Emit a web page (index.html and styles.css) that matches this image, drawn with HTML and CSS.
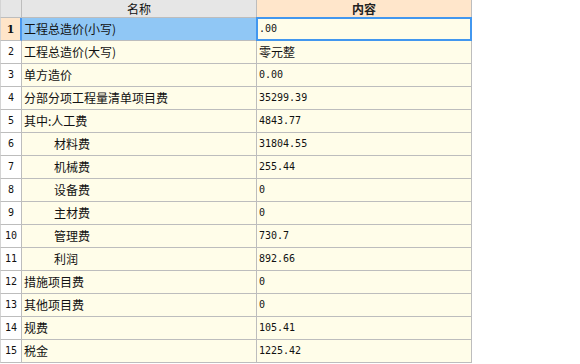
FILE: index.html
```html
<!DOCTYPE html>
<html lang="zh">
<head>
<meta charset="utf-8">
<title>工程造价</title>
<link rel="stylesheet" href="styles.css">
</head>
<body>
<div class="sheet">
  <div class="hd idx"></div>
  <div class="hd name">名称</div>
  <div class="hd val">内容</div>

  <div class="idx cur">1</div>
  <div class="name sel">工程总造价(小写)</div>
  <div class="val active"><span class="num">.00</span></div>

  <div class="idx"><span class="num">2</span></div>
  <div class="name">工程总造价(大写)</div>
  <div class="val">零元整</div>

  <div class="idx"><span class="num">3</span></div>
  <div class="name">单方造价</div>
  <div class="val"><span class="num">0.00</span></div>

  <div class="idx"><span class="num">4</span></div>
  <div class="name">分部分项工程量清单项目费</div>
  <div class="val"><span class="num">35299.39</span></div>

  <div class="idx"><span class="num">5</span></div>
  <div class="name">其中:人工费</div>
  <div class="val"><span class="num">4843.77</span></div>

  <div class="idx"><span class="num">6</span></div>
  <div class="name sub">材料费</div>
  <div class="val"><span class="num">31804.55</span></div>

  <div class="idx"><span class="num">7</span></div>
  <div class="name sub">机械费</div>
  <div class="val"><span class="num">255.44</span></div>

  <div class="idx"><span class="num">8</span></div>
  <div class="name sub">设备费</div>
  <div class="val"><span class="num">0</span></div>

  <div class="idx"><span class="num">9</span></div>
  <div class="name sub">主材费</div>
  <div class="val"><span class="num">0</span></div>

  <div class="idx"><span class="num">10</span></div>
  <div class="name sub">管理费</div>
  <div class="val"><span class="num">730.7</span></div>

  <div class="idx"><span class="num">11</span></div>
  <div class="name sub">利润</div>
  <div class="val"><span class="num">892.66</span></div>

  <div class="idx"><span class="num">12</span></div>
  <div class="name">措施项目费</div>
  <div class="val"><span class="num">0</span></div>

  <div class="idx"><span class="num">13</span></div>
  <div class="name">其他项目费</div>
  <div class="val"><span class="num">0</span></div>

  <div class="idx"><span class="num">14</span></div>
  <div class="name">规费</div>
  <div class="val"><span class="num">105.41</span></div>

  <div class="idx"><span class="num">15</span></div>
  <div class="name">税金</div>
  <div class="val"><span class="num">1225.42</span></div>
</div>
</body>
</html>
```
FILE: styles.css
```css
html, body {
  margin: 0;
  padding: 0;
  background: #ffffff;
}

body {
  font-family: "Noto Sans CJK SC", "DejaVu Sans", sans-serif;
  font-size: 12px;
  color: #111111;
}

.sheet {
  display: grid;
  grid-template-columns: 22px 235px 215px;
  grid-template-rows: 18px;
  grid-auto-rows: 23px;
  width: 472px;
}

.sheet > div {
  box-sizing: border-box;
  border-right: 1px solid #bdbdbd;
  border-bottom: 1px solid #bdbdbd;
  display: flex;
  align-items: center;
  white-space: nowrap;
  overflow: hidden;
  line-height: 1;
}

.num {
  font-family: "DejaVu Sans Mono", "Liberation Mono", monospace;
  font-size: 10px;
  letter-spacing: 0;
}

.idx {
  justify-content: center;
  background: #ffffff;
  border-left: 1px solid #d4d4d4;
}

.name {
  background: #fffde9;
  padding-left: 2px;
}

.name.sub {
  padding-left: 32px;
}

.val {
  background: #fffde9;
  padding-left: 2px;
}

.hd {
  background: #e6e6e6;
  justify-content: center;
  padding-left: 0;
  font-size: 12px;
}

.hd.val {
  background: #ffe6cb;
  font-weight: bold;
  color: #222222;
}

.idx.cur {
  background: #ffe5c9;
  font-family: "DejaVu Serif", "Liberation Serif", serif;
  font-weight: bold;
  font-size: 11px;
  border-right-color: #4a98ef;
  border-right-width: 2px;
}

.name.sel {
  background: #90c7f5;
}

.val.active {
  position: relative;
  overflow: visible;
}

.val.active::after {
  content: "";
  position: absolute;
  left: -1px;
  top: -1px;
  right: -1px;
  bottom: -1px;
  border: 2px solid #4297ef;
  pointer-events: none;
}
```
